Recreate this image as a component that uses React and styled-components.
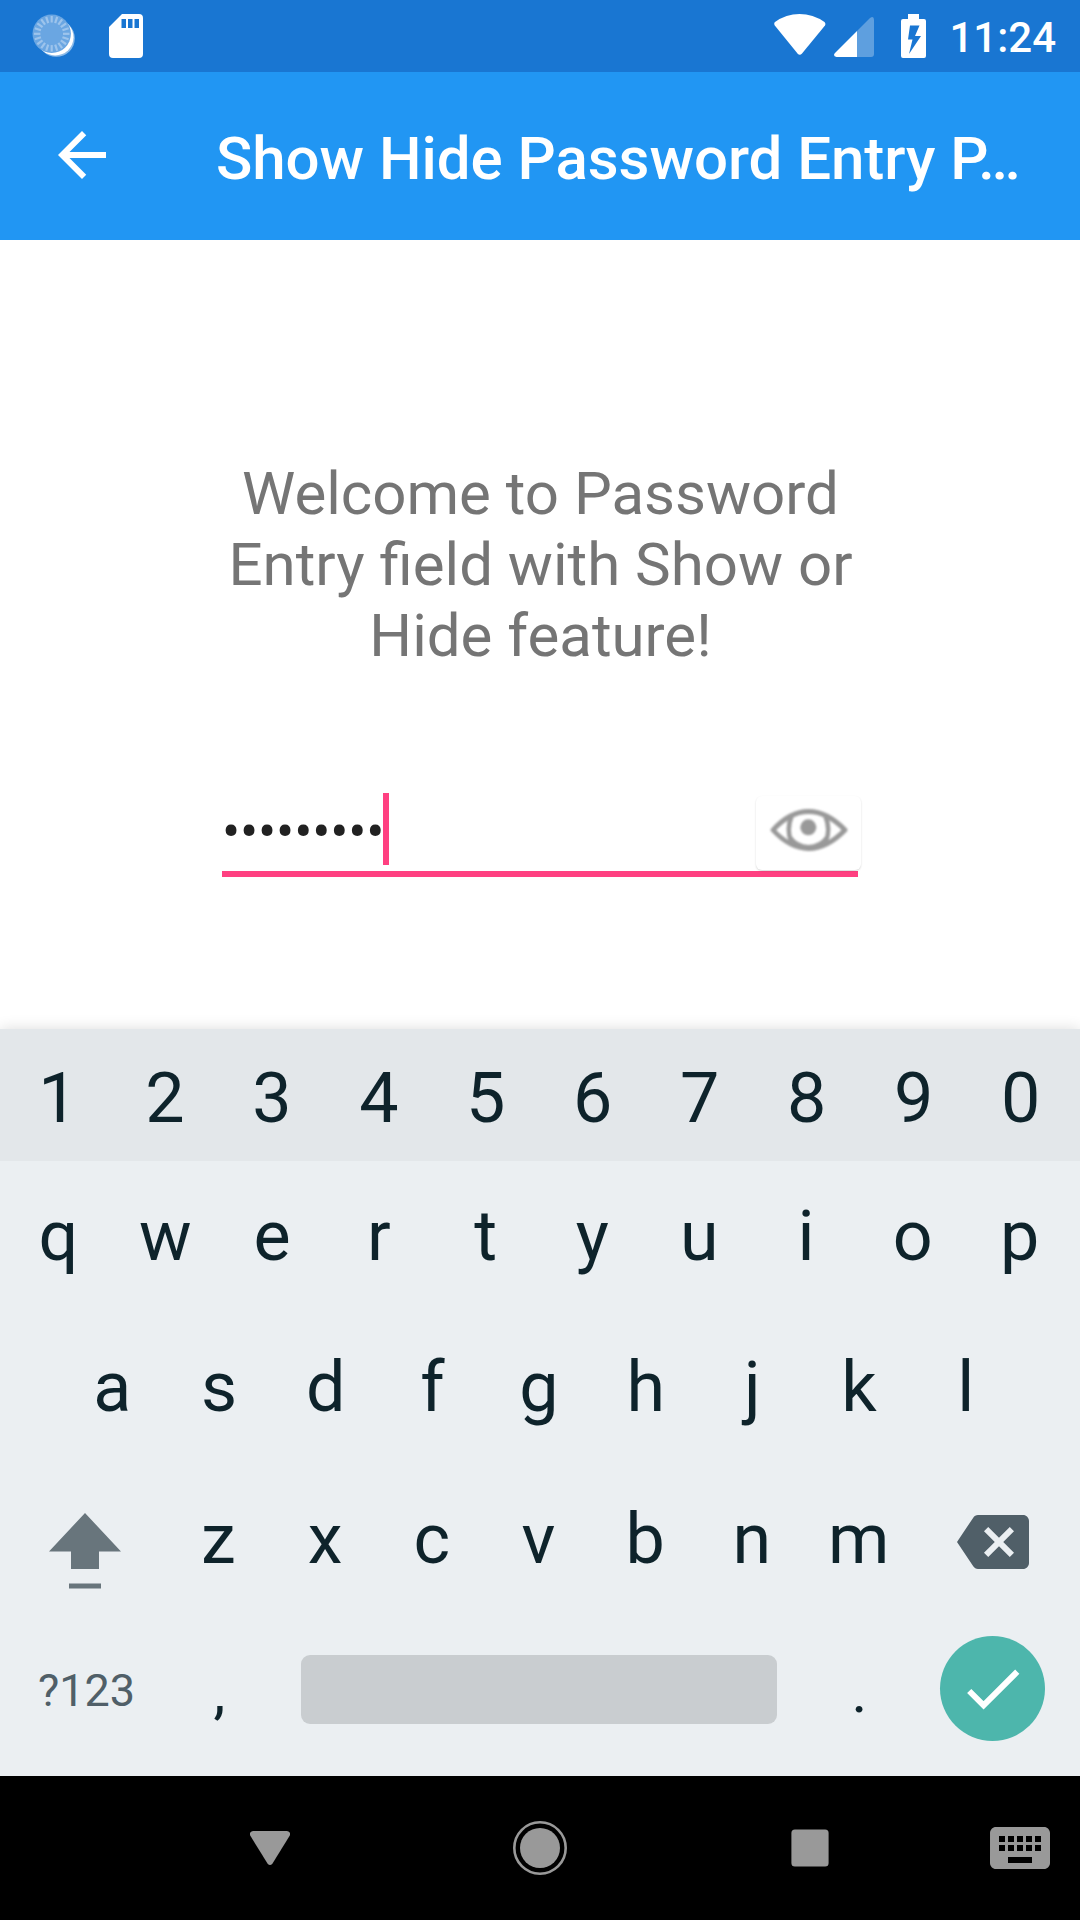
import React from "react";
import styled, { createGlobalStyle } from "styled-components";
import { MdArrowBack, MdBackspace, MdKeyboard } from "react-icons/md";

const GlobalStyle = createGlobalStyle`
  * { box-sizing: border-box; }
  body { margin: 0; background: #fff; font-family: Roboto, "Noto Sans", sans-serif; }
  svg { display: block; }
`;

const Screen = styled.div`
  width: 1080px;
  height: 1920px;
  display: flex;
  flex-direction: column;
  overflow: hidden;
  background: #fff;
`;

const StatusBar = styled.header`
  height: 72px;
  flex: none;
  display: flex;
  justify-content: space-between;
  background: #1976d2;
`;

const StatusGroup = styled.div`
  display: flex;
  align-items: center;
`;

const Clock = styled.span`
  margin-left: 23px;
  padding: 3px 24px 0 0;
  font-size: 42px;
  font-weight: 500;
  line-height: 69px;
  color: #fff;
`;

const AppBar = styled.div`
  height: 168px;
  flex: none;
  display: flex;
  align-items: center;
  background: #2196f3;
  color: #fff;
`;

const BackButton = styled.div`
  width: 216px;
  padding: 0 0 2px 46px;
  font-size: 72px;
`;

const Title = styled.h1`
  margin: 0;
  padding-top: 5px;
  font-size: 60px;
  font-weight: 500;
  line-height: 72px;
  letter-spacing: -0.04px;
  white-space: nowrap;
`;

const Content = styled.main`
  height: 789px;
  flex: none;
  padding: 218px 218px 0 219px;
`;

const Welcome = styled.p`
  margin: 0;
  font-size: 60px;
  line-height: 71px;
  text-align: center;
  color: #757575;
`;

const Field = styled.div`
  height: 89px;
  margin: 117px 0 0 3px;
  width: 636px;
  display: flex;
  align-items: flex-start;
  border-bottom: 6px solid #ff4081;
  padding-top: 5px;
`;

const Dots = styled.span`
  width: 161px;
  padding-top: 7px;
  font-size: 54px;
  line-height: 64px;
  letter-spacing: -0.18px;
  color: #212121;
  white-space: nowrap;
`;

const Caret = styled.span`
  width: 6px;
  height: 72px;
  background: #ff4081;
`;

const EyeButton = styled.div`
  width: 105px;
  height: 74px;
  flex: none;
  margin: 3px -3px 0 auto;
  padding: 11px 0 0 11px;
  border-radius: 6px;
  background: #fff;
  box-shadow: 0 1px 2px rgba(0, 0, 0, 0.16);
`;

const Keyboard = styled.section`
  position: relative;
  height: 747px;
  flex: none;
  background: #ebeff2;
  color: #0e232b;
  box-shadow: 0 0 14px rgba(0, 0, 0, 0.14);
`;

const KeyRow = styled.div`
  height: ${(p) => p.$h}px;
  display: flex;
  align-items: center;
  padding: ${(p) => p.$top || 0}px ${(p) => p.$right}px 0 ${(p) => p.$left}px;
  background: ${(p) => (p.$tinted ? "#e3e7ea" : "transparent")};
`;

const Key = styled.span`
  flex: ${(p) => (p.$w ? "none" : "1 1 0")};
  width: ${(p) => (p.$w ? p.$w + "px" : "auto")};
  display: flex;
  justify-content: center;
  font-size: 70px;
  line-height: 82px;
`;

const ShiftKey = styled(Key)`
  padding: 24px 0 0 1px;
`;

const SymbolsKey = styled(Key)`
  padding: 3px 0 0 2px;
  font-size: 45px;
  color: #505f68;
`;

const PunctuationKey = styled(Key)`
  font-size: 60px;
  padding-top: 6px;
`;

const SpaceBar = styled.div`
  width: 476px;
  height: 69px;
  flex: none;
  border-radius: 9px;
  background: #c9cdd0;
`;

const EnterKey = styled.div`
  width: 105px;
  height: 105px;
  flex: none;
  margin: 0 0 1px 27px;
  border-radius: 50%;
  background: #4db6ac;
`;

const BackspaceKey = styled(Key)`
  padding-top: 5px;
  font-size: 72px;
  color: #505f68;
`;

const NavBar = styled.nav`
  height: 144px;
  flex: none;
  display: grid;
  grid-template-columns: 135px 270px 270px 270px 135px;
  align-items: center;
  justify-items: center;
  background: #000;
  color: #999;
`;

const KeyboardSwitch = styled.div`
  justify-self: end;
  padding-right: 24px;
  font-size: 72px;
`;

const SoftEye = styled.svg`
  filter: blur(0.9px);
`;

function SpinnerIcon() {
  const ticks = Array.from({ length: 20 }, (_, i) => i * 18);
  return (
    <svg width="44" height="44" viewBox="0 0 44 44">
      <circle cx="24.3" cy="24.3" r="18.500" fill="#fff" opacity=".5" />
      <circle cx="23.2" cy="23.2" r="18.300" fill="#fff" />
      <circle cx="19.700" cy="19.800" r="19.200" fill="#6aa6e2" />
      {ticks.map((a) => (
        <path key={a} d="M19.700 2v6.500" stroke="#9dc4ec" strokeWidth="2.200" transform={`rotate(${a} 19.700 19.800)`} />
      ))}
    </svg>
  );
}

function SdCardIcon() {
  return (
    <svg width="34" height="44" viewBox="0 0 34 44">
      <path fill="#fff" fillRule="evenodd" d="M13 0h17a4 4 0 0 1 4 4v36a4 4 0 0 1-4 4H4a4 4 0 0 1-4-4V13zM12.500 5v9h4.500v-9zM19 5v9h4.500v-9zM25.500 5v9h4.500v-9z" />
    </svg>
  );
}

function WifiIcon() {
  return (
    <svg width="52" height="44" viewBox="0 0 52 44">
      <path fill="#fff" d="M1 8Q12 0 25.500 0T50.500 8Q52 9.500 51 11.500L28 39.500Q25.800 42 23.500 39.500L.8 11.500Q-.5 9.500 1 8z" />
    </svg>
  );
}

function SignalIcon() {
  return (
    <svg width="40" height="42" viewBox="0 -2 40 42">
      <path fill="#fff" opacity=".3" d="M23 14 36 1Q40-1.500 40 3v34q0 3-3 3H23z" />
      <path fill="#fff" d="M23 14v26H2.500Q-1.500 39 1 36z" />
    </svg>
  );
}

function BatteryIcon() {
  return (
    <svg width="25" height="44" viewBox="0 0 25 44">
      <path fill="#fff" d="M7 0h11v5h5q2 0 2 2v35q0 2-2 2H2q-2 0-2-2V7q0-2 2-2h5z" />
      <path fill="#1976d2" d="M9 11.500h9.500l-4.500 10.500h6L8 40l3.500-14.500H7z" />
    </svg>
  );
}

function EyeIcon() {
  return (
    <SoftEye width="82" height="46" viewBox="0 0 82 46" fill="none" stroke="#999">
      <path strokeWidth="4.800" strokeLinejoin="round" d="M6 23Q23 4.500 41.500 4.500T78 23Q60 41.500 41.500 41.500T6 23z" />
      <path strokeWidth="4.500" d="M24.500 9.500Q19 22 24.500 36M58.500 9.500Q64 22 58.500 36" />
      <path strokeWidth="4" d="M23 30Q29 39 41.500 40Q54 39 60 30" />
      <circle cx="41.300" cy="20.300" r="8" fill="#999" stroke="none" />
    </SoftEye>
  );
}

function ShiftIcon() {
  return (
    <svg width="72" height="76" viewBox="0 0 72 76">
      <path fill="#68757c" d="M36 0 72 38.500H50V56H22V38.500H0zM20 70.500h32v5H20z" />
    </svg>
  );
}

function CheckIcon() {
  return (
    <svg width="105" height="105" viewBox="0 0 106 106">
      <path fill="none" stroke="#fff" strokeWidth="6" d="M29.500 55.500 44 70 78 36" />
    </svg>
  );
}

const Spacer = styled.span`
  width: ${(p) => p.$w}px;
  flex: none;
`;

export default function App() {
  return (
    <>
      <GlobalStyle />
      <Screen>
        <StatusBar>
          <StatusGroup>
            <Spacer $w={32} />
            <SpinnerIcon />
            <Spacer $w={33} />
            <SdCardIcon />
          </StatusGroup>
          <StatusGroup>
            <WifiIcon />
            <Spacer $w={8} />
            <SignalIcon />
            <Spacer $w={27} />
            <BatteryIcon />
            <Clock>11:24</Clock>
          </StatusGroup>
        </StatusBar>
        <AppBar>
          <BackButton><MdArrowBack /></BackButton>
          <Title>Show Hide Password Entry P…</Title>
        </AppBar>
        <Content>
          <Welcome>
            Welcome to Password<br />Entry field with Show or<br />Hide feature!
          </Welcome>
          <Field>
            <Dots>•••••••••</Dots>
            <Caret />
            <EyeButton><EyeIcon /></EyeButton>
          </Field>
        </Content>
        <Keyboard>
          <KeyRow $h={132} $top={6} $left={4.5} $right={6} $tinted>
            {[..."1234567890"].map((k) => <Key key={k}>{k}</Key>)}
          </KeyRow>
          <KeyRow $h={150} $left={5} $right={7}>
            {[..."qwertyuiop"].map((k) => <Key key={k}>{k}</Key>)}
          </KeyRow>
          <KeyRow $h={152} $left={59} $right={61}>
            {[..."asdfghjkl"].map((k) => <Key key={k}>{k}</Key>)}
          </KeyRow>
          <KeyRow $h={152} $left={4} $right={7}>
            <ShiftKey $w={161}><ShiftIcon /></ShiftKey>
            {[..."zxcvbnm"].map((k) => <Key key={k}>{k}</Key>)}
            <BackspaceKey $w={161}><MdBackspace /></BackspaceKey>
          </KeyRow>
          <KeyRow $h={148} $left={5} $right={5}>
            <SymbolsKey $w={161}>?123</SymbolsKey>
            <PunctuationKey $w={107}>,</PunctuationKey>
            <Spacer $w={28} />
            <SpaceBar />
            <Spacer $w={29} />
            <PunctuationKey $w={107}>.</PunctuationKey>
            <EnterKey><CheckIcon /></EnterKey>
          </KeyRow>
        </Keyboard>
        <NavBar>
          <Spacer $w={0} />
          <svg width="40" height="34" viewBox="0 0 40 34">
            <path fill="currentColor" d="M3 0h34q4.500 1 2.500 5L22.500 32.500q-2.500 3-5 0L.5 5Q-1.500 1 3 0z" />
          </svg>
          <svg width="54" height="54" viewBox="0 0 54 54">
            <circle cx="27" cy="27" r="25.700" fill="none" stroke="currentColor" strokeWidth="2.600" />
            <circle cx="27" cy="27" r="20" fill="currentColor" />
          </svg>
          <svg width="38" height="38" viewBox="0 0 38 38">
            <rect x=".4" y=".4" width="37.200" height="37.200" rx="3.500" fill="currentColor" />
          </svg>
          <KeyboardSwitch><MdKeyboard /></KeyboardSwitch>
        </NavBar>
      </Screen>
    </>
  );
}
